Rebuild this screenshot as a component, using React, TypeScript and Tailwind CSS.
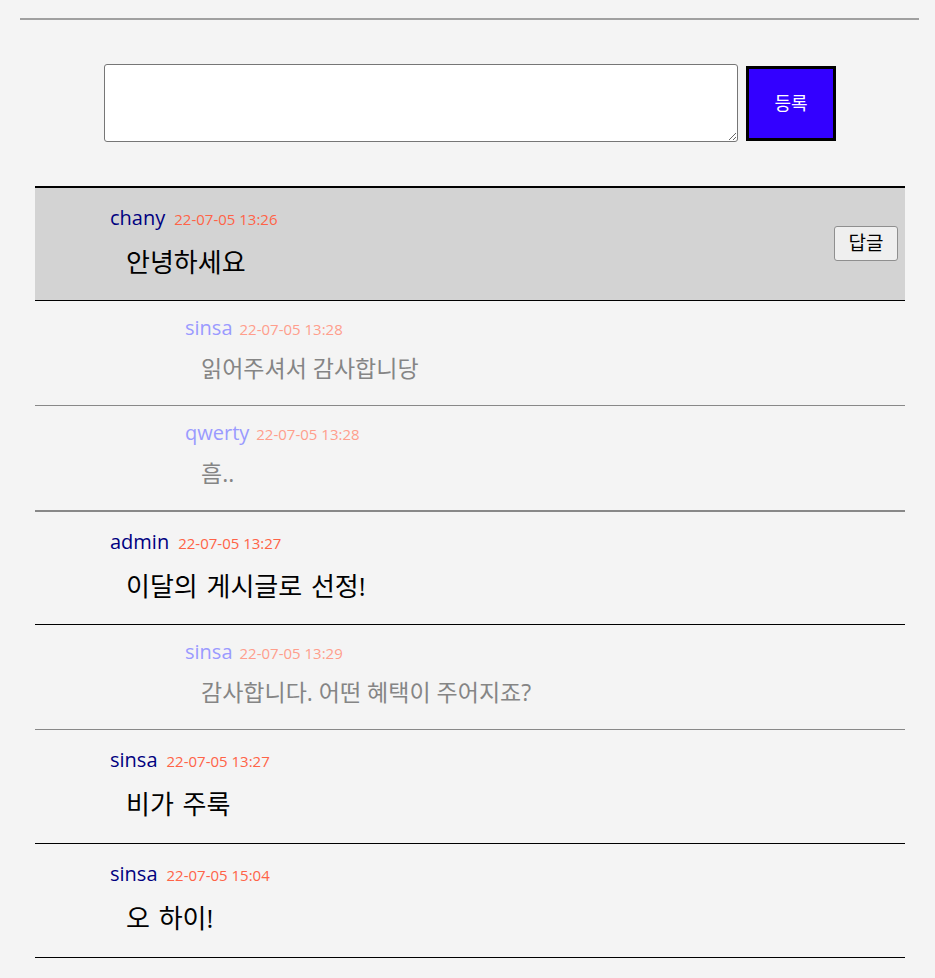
import React from "react";

interface CommentItem {
  id: number;
  name: string;
  date: string;
  text: string;
  reply: boolean;
  line: string;
  active?: boolean;
}

const comments: CommentItem[] = [
  { id: 1, name: "chany", date: "22-07-05 13:26", text: "안녕하세요", reply: false, line: "h-[113px] border-b border-black", active: true },
  { id: 2, name: "sinsa", date: "22-07-05 13:28", text: "읽어주셔서 감사합니당", reply: true, line: "h-[105px] border-b border-[#888888]" },
  { id: 3, name: "qwerty", date: "22-07-05 13:28", text: "흠..", reply: true, line: "h-[106px] border-b-2 border-[#888888]" },
  { id: 4, name: "admin", date: "22-07-05 13:27", text: "이달의 게시글로 선정!", reply: false, line: "h-[113px] border-b border-black" },
  { id: 5, name: "sinsa", date: "22-07-05 13:29", text: "감사합니다. 어떤 혜택이 주어지죠?", reply: true, line: "h-[105px] border-b border-[#888888]" },
  { id: 6, name: "sinsa", date: "22-07-05 13:27", text: "비가 주룩", reply: false, line: "h-[114px] border-b border-black" },
  { id: 7, name: "sinsa", date: "22-07-05 15:04", text: "오 하이!", reply: false, line: "h-[114px] border-b border-black" },
];

const CommentRow = ({ item }: { item: CommentItem }) => {
  if (item.reply) {
    return (
      <div className={`flex flex-col pl-[150px] pt-[13px] ${item.line}`}>
        <div className="flex items-baseline gap-[7px] leading-[28px]">
          <span className="text-[20px] text-[#9a9aff]">{item.name}</span>
          <span className="text-[15px] text-[#ff9e8c]">{item.date}</span>
        </div>
        <p className="mt-[10px] pl-[16px] text-[23px] leading-[30px] text-[#858585]">{item.text}</p>
      </div>
    );
  }

  return (
    <div className={`relative flex flex-col pl-[75px] pt-[16px] ${item.line} ${item.active ? "bg-[#d3d3d3]" : ""}`}>
      <div className="flex items-baseline gap-[9px] leading-[28px]">
        <span className="text-[20px] text-[#000080]">{item.name}</span>
        <span className="text-[15px] text-[#ff6347]">{item.date}</span>
      </div>
      <p className="mt-[12px] pl-[16px] text-[26px] leading-[34px] tracking-normal text-black [word-spacing:2px]">
        {item.text}
      </p>
      {item.active && (
        <button className="absolute right-[7px] top-[38px] h-[35px] w-[64px] rounded-[3px] border border-[#8f8f8f] bg-[#efefef] text-[19px] text-black">
          답글
        </button>
      )}
    </div>
  );
};

export default function App() {
  return (
    <div
      className="min-h-[978px] bg-[#f4f4f4] pl-5 pr-4 pt-[18px]"
      style={{ fontFamily: '"Open Sans", "Noto Sans CJK KR", sans-serif' }}
    >
      <hr className="border-t-2 border-[#a0a0a0]" />

      <div className="mt-[44px] flex items-center gap-2 pl-[84px]">
        <textarea className="h-[78px] w-[634px] rounded-[3px] border border-[#767676] bg-white" />
        <button className="h-[75px] w-[90px] border-[3px] border-black bg-[#3300ff] text-[18px] text-white">
          등록
        </button>
      </div>

      <div className="ml-[15px] mr-[14px] mt-[44px] border-t-2 border-black">
        {comments.map((item) => (
          <CommentRow key={item.id} item={item} />
        ))}
      </div>
    </div>
  );
}
